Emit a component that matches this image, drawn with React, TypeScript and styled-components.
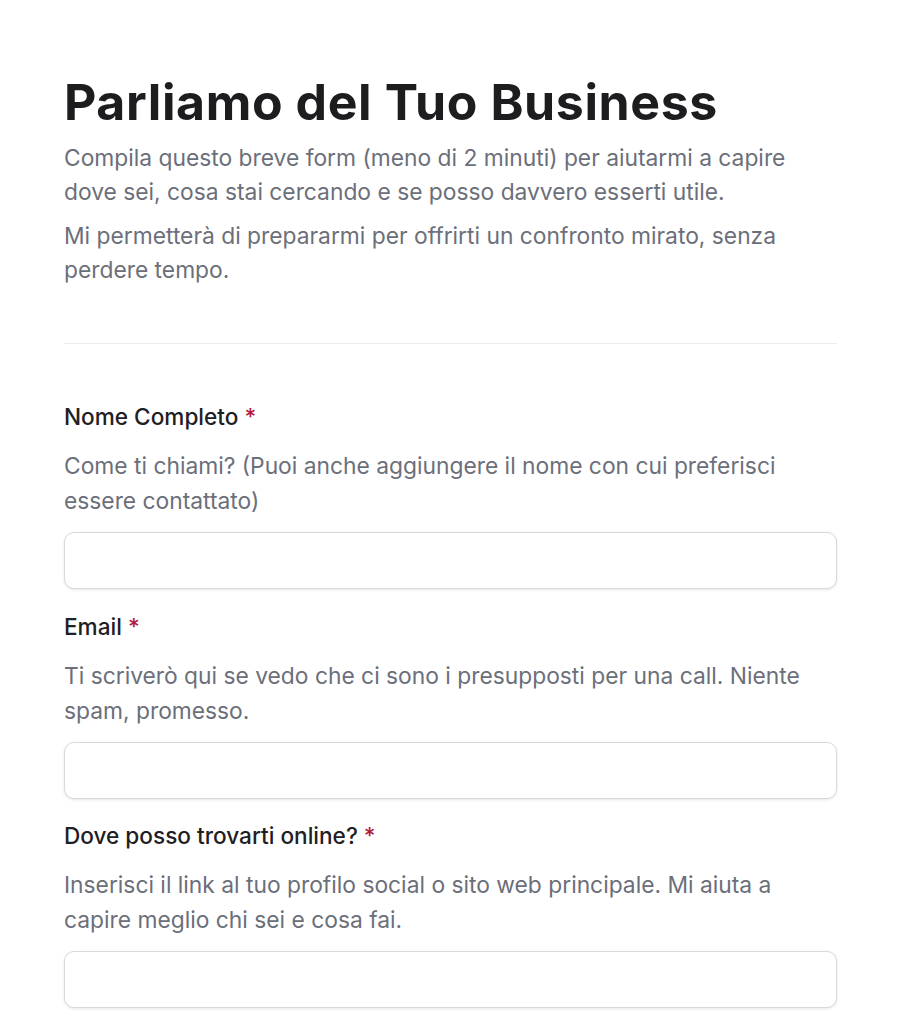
import React from "react";
import styled, { createGlobalStyle } from "styled-components";

const Global = createGlobalStyle`
  html, body { margin: 0; padding: 0; background: #ffffff; }
  body { font-family: Inter, "Noto Sans", "Liberation Sans", sans-serif; -webkit-font-smoothing: antialiased; }
  * { box-sizing: border-box; }
`;

const Page = styled.main`
  width: 902px;
  padding: 72px 65px 40px 64px;
`;

const Header = styled.header`
  display: flex;
  flex-direction: column;
`;

const Title = styled.h1`
  margin: 0 0 9px;
  font-size: 50px;
  line-height: 60px;
  font-weight: 700;
  letter-spacing: 0.6px;
  color: #1d1d20;
`;

const Lead = styled.p`
  margin: 0 0 10px;
  font-size: 22.8px;
  line-height: 34px;
  color: #6b6f7a;
`;

const Divider = styled.hr`
  border: none;
  border-top: 1px solid #ececee;
  margin: 46px 0 0;
`;

const Form = styled.form`
  display: flex;
  flex-direction: column;
  padding-top: 58px;
  gap: 22.5px;
`;

const Field = styled.div`
  display: flex;
  flex-direction: column;
`;

const Label = styled.label`
  font-size: 22.6px;
  line-height: 30px;
  font-weight: 500;
  color: #1f2024;
  margin-bottom: 16px;
`;

const Required = styled.span`
  color: #b3183f;
  margin-left: 6px;
`;

const Help = styled.p`
  margin: 0 0 14px;
  font-size: 22.8px;
  line-height: 35px;
  color: #6b6f7a;
`;

const Input = styled.input`
  width: 100%;
  height: 57px;
  border: 1px solid #d9d9dc;
  border-radius: 10px;
  background: #fff;
  box-shadow: 0 1px 3px rgba(0, 0, 0, 0.1);
  font-size: 18px;
  padding: 0 16px;
  outline: none;
`;

const fields = [
  {
    label: "Nome Completo",
    help: "Come ti chiami? (Puoi anche aggiungere il nome con cui preferisci essere contattato)",
  },
  {
    label: "Email",
    help: "Ti scriverò qui se vedo che ci sono i presupposti per una call. Niente spam, promesso.",
  },
  {
    label: "Dove posso trovarti online?",
    help: "Inserisci il link al tuo profilo social o sito web principale. Mi aiuta a capire meglio chi sei e cosa fai.",
  },
];

export default function App() {
  return (
    <>
      <Global />
      <Page>
        <Header>
          <Title>Parliamo del Tuo Business</Title>
          <Lead>
            Compila questo breve form (meno di 2 minuti) per aiutarmi a capire
            dove sei, cosa stai cercando e se posso davvero esserti utile.
          </Lead>
          <Lead>
            Mi permetterà di prepararmi per offrirti un confronto mirato, senza
            perdere tempo.
          </Lead>
        </Header>
        <Divider />
        <Form>
          {fields.map((f) => (
            <Field key={f.label}>
              <Label>
                {f.label}
                <Required>*</Required>
              </Label>
              <Help>{f.help}</Help>
              <Input type="text" />
            </Field>
          ))}
        </Form>
      </Page>
    </>
  );
}
